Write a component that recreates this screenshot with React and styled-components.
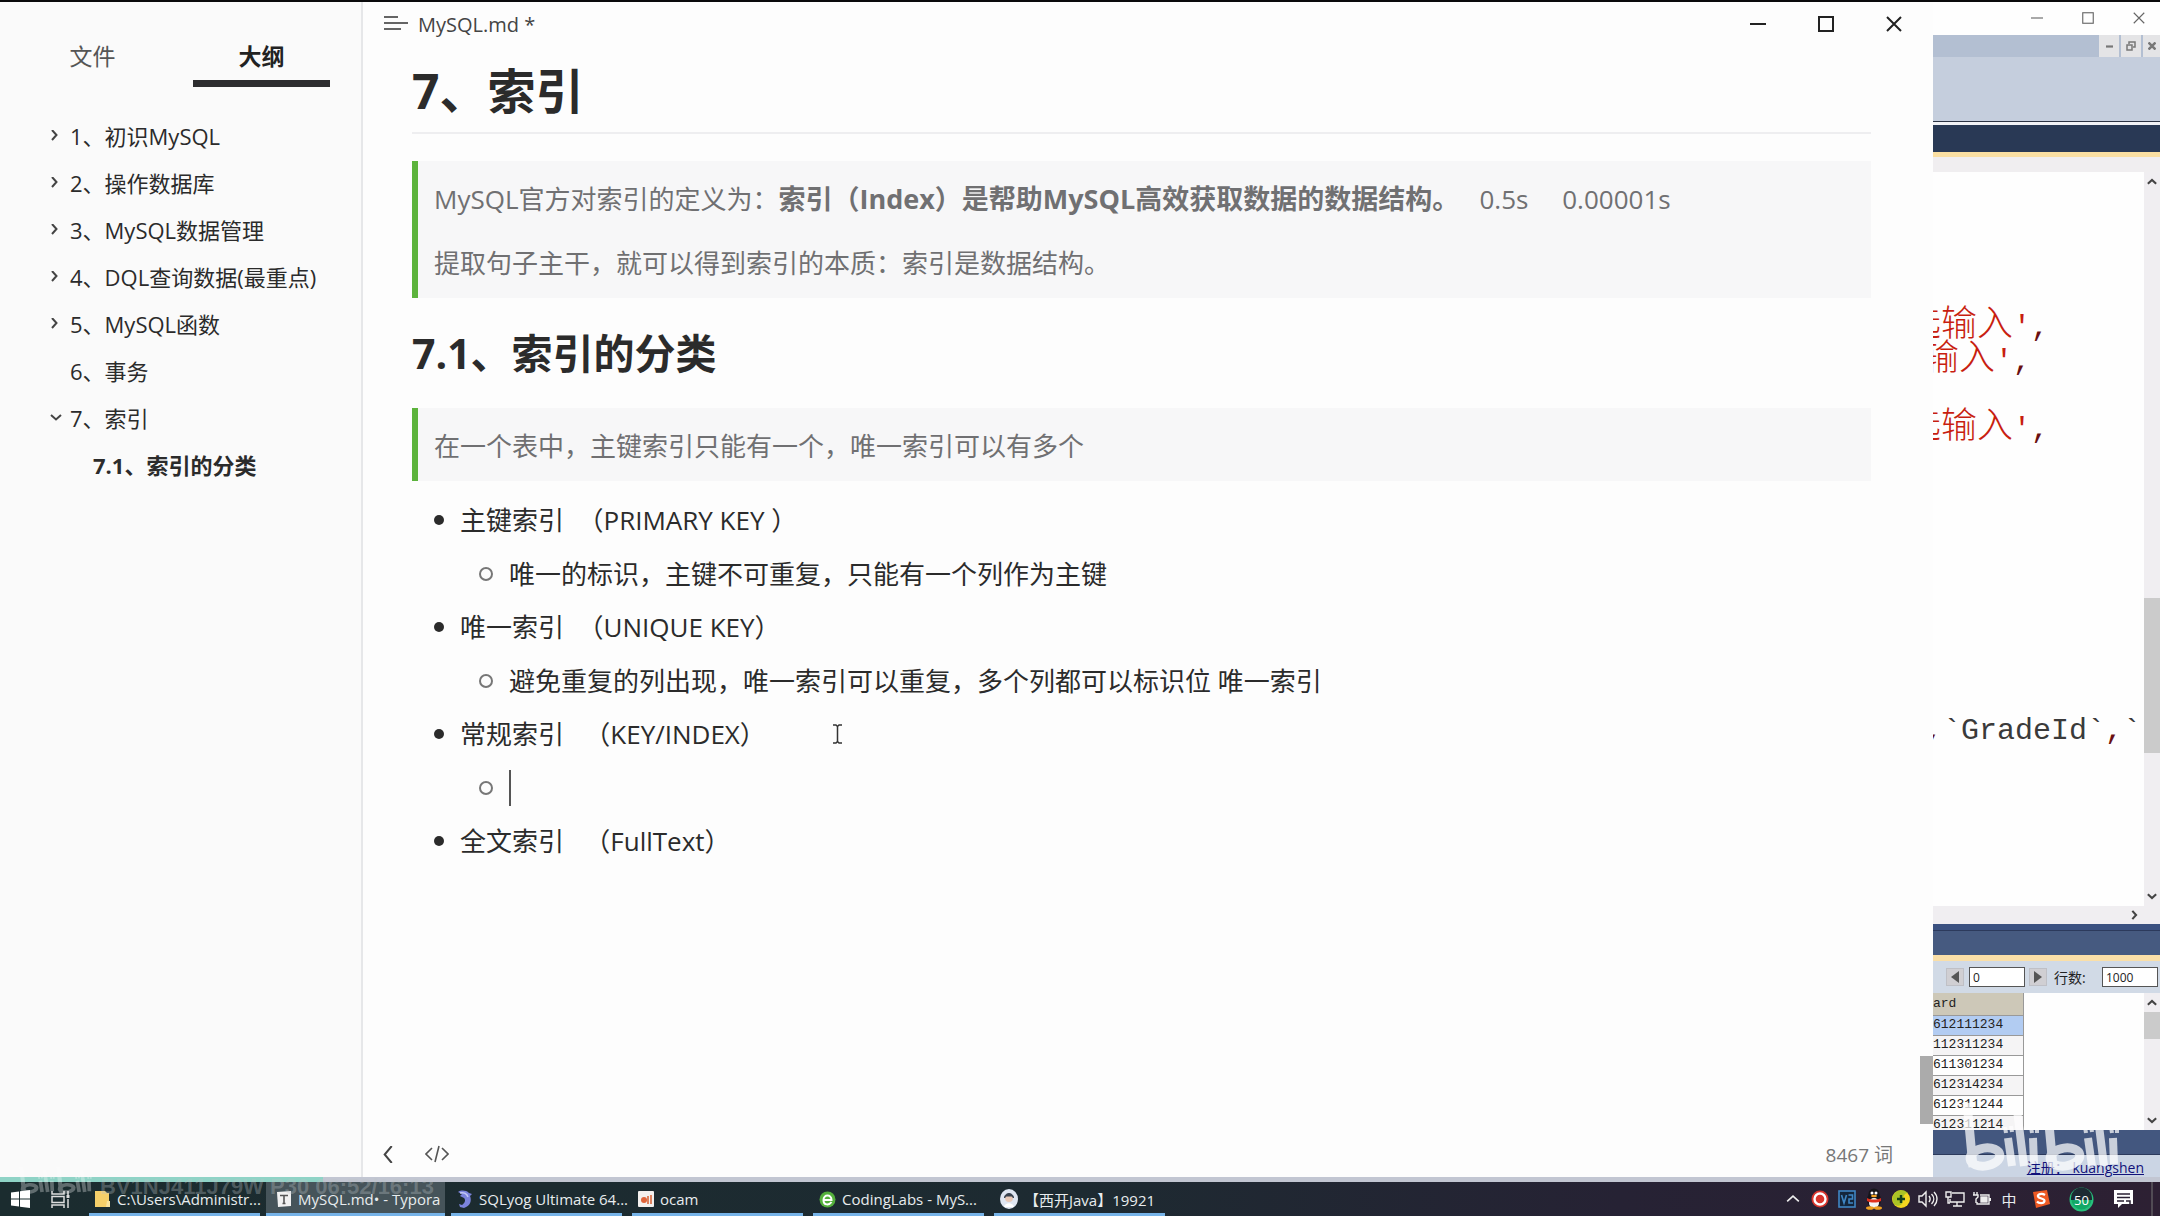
import React from "react";
import styled, { createGlobalStyle, css } from "styled-components";

const Global = createGlobalStyle`
  * { box-sizing: border-box; }
  body { margin: 0; background: #fdfdfd; }
  button, input, a { font: inherit; color: inherit; }
  button { border: 0; background: none; padding: 0; }
  a { text-decoration: none; }
  ul { list-style: none; margin: 0; padding: 0; }
  svg { display: block; flex: none; }
`;

const uiFont = `"Open Sans", "Noto Sans CJK SC", sans-serif`;

/* ---------- page ---------- */

const Screen = styled.div`
  display: flex;
  flex-direction: column;
  min-height: 100vh;
  overflow: hidden;
  font-family: ${uiFont};
  color: #2b2b2b;
  border-top: 2px solid #0a0a0c;
  position: relative;
`;

const Workspace = styled.div`
  flex: 1;
  display: flex;
  min-height: 0;
`;

/* ---------- sidebar ---------- */

const Sidebar = styled.aside`
  width: 363px;
  flex: none;
  background: #fafafa;
  border-right: 2px solid #e6e7e9;
`;

const Tabs = styled.div`
  display: flex;
  gap: 32px;
  padding: 36px 24px 0;
`;

const Tab = styled.button`
  width: 137px;
  height: 49px;
  padding-bottom: 6px;
  font-size: 23px;
  line-height: 34px;
  border-bottom: 7px solid ${(p) => (p.$active ? "#2d2d2f" : "transparent")};
  font-weight: ${(p) => (p.$active ? 700 : 400)};
  color: ${(p) => (p.$active ? "#222" : "#555")};
`;

const Outline = styled.nav`
  padding: 24px 0 0 48px;
`;

const OutlineRow = styled.div`
  display: flex;
  align-items: center;
  height: 47px;
  font-size: 22px;
  font-weight: ${(p) => (p.$strong ? 700 : 400)};
  padding-left: ${(p) => (p.$strong ? 23 : 0)}px;
  white-space: nowrap;
`;

const Twisty = styled.button`
  width: 22px;
  height: 22px;
  display: flex;
  align-items: flex-end;
`;

/* ---------- editor ---------- */

const Editor = styled.main`
  flex: 1;
  min-width: 0;
  display: flex;
  flex-direction: column;
  background: #fdfdfd;
  position: relative;
`;

const TitleBar = styled.header`
  display: flex;
  align-items: center;
  height: 44px;
  padding: 0 31px 0 21px;
  gap: 10px;
  font-size: 20px;
  color: #444;
`;

const WindowControls = styled.div`
  display: flex;
  margin-left: auto;
  gap: ${(p) => p.$gap}px;
`;

const IconButton = styled.button`
  display: flex;
  align-items: center;
  justify-content: center;
`;

const Article = styled.article`
  flex: 1;
  padding: 0 62px 0 49px;
  font-size: 26px;
  line-height: 42px;
`;

const H1 = styled.h1`
  margin: 14px 0 27px;
  padding-bottom: 10px;
  border-bottom: 2px solid #eeeef0;
  font-size: 48px;
  line-height: 62px;
`;

const H2 = styled.h2`
  margin: 25px 0;
  font-size: 41px;
  line-height: 60px;
`;

const Quote = styled.blockquote`
  margin: 0;
  padding: 17px 16px 14px;
  border-left: 6px solid #5cb33c;
  background: #f7f7f8;
  color: #707072;
  white-space: pre-wrap;

  p { margin: 0 0 22px; }
  p:last-child { margin: 0; }
  strong { font-size: 27px; }
`;

const List = styled.ul`
  padding: 18px 0 0 22px;
`;

const Item = styled.li`
  display: flex;
  align-items: center;
  height: 42px;
  margin-bottom: ${(p) => (p.$nested ? 11 : 12)}px;
  margin-left: ${(p) => (p.$nested ? 45 : 0)}px;
  white-space: pre;

  &::before {
    content: "";
    flex: none;
    width: 10px;
    height: 10px;
    margin-right: 16px;
    border-radius: 50%;
    ${(p) =>
      p.$nested
        ? css`border: 2px solid #777;`
        : css`background: #2b2b2b;`}
  }
`;

const Caret = styled.span`
  width: 2px;
  height: 36px;
  background: #555;
`;

const Pointer = styled.svg`
  margin-left: 67px;
`;

const Thumb = styled.div`
  position: absolute;
  right: 0;
  bottom: 53px;
  width: 13px;
  height: 68px;
  background: #ababab;
`;

const Footer = styled.footer`
  display: flex;
  align-items: center;
  gap: 29px;
  height: 46px;
  padding: 0 40px 0 16px;
  font-size: 19px;
  color: #777;
`;

const WordCount = styled.button`
  margin-left: auto;
`;

/* ---------- database window ---------- */

const Db = styled.section`
  width: 227px;
  flex: none;
  display: flex;
  flex-direction: column;
  overflow: hidden;
  background: #fefefe;
`;

const DbTitle = styled.div`
  display: flex;
  align-items: center;
  height: 33px;
  padding: 0 15px 2px;
`;

const Band = styled.div`
  flex: none;
  height: ${(p) => p.$h}px;
  background: ${(p) => p.$bg};
  ${(p) => p.$line && css`border-bottom: 1px solid ${p.$line};`}
`;

const MdiBar = styled(Band)`
  display: flex;
  justify-content: flex-end;
  gap: 2px;
`;

const MdiButton = styled(IconButton)`
  width: ${(p) => p.$w || 20}px;
  background: #e4e4e6;
`;

const CodeArea = styled.div`
  flex: 1;
  display: flex;
  min-height: 0;
`;

const Code = styled.div`
  flex: 1;
  min-width: 0;
  padding-top: 32px;
  overflow: hidden;
  font-family: "Liberation Mono", "Noto Sans CJK SC", monospace;
  font-size: 30px;
`;

const CodeLine = styled.div`
  display: flex;
  justify-content: flex-end;
  align-items: baseline;
  height: 34px;
  line-height: 34px;
  padding-right: ${(p) => p.$pad || 0}px;
  white-space: pre;
  color: ${(p) => (p.$text ? "#c81e10" : "#3a3a3a")};
`;

const Han = styled.span`
  font-size: 36px;
  line-height: 42px;
  font-weight: 300;
`;

const Comma = styled.span`
  color: #6a1010;
`;

const ScrollV = styled.div`
  width: 16px;
  flex: none;
  display: flex;
  flex-direction: column;
  align-items: center;
  justify-content: space-between;
  padding: ${(p) => p.$pad}px 0;
  background: #f0eef1;
  position: relative;

  &::after {
    content: "";
    position: absolute;
    left: 0;
    right: 0;
    top: ${(p) => p.$top}px;
    height: ${(p) => p.$size}px;
    background: #cbcbcb;
  }
`;

const ScrollH = styled(Band)`
  display: flex;
  align-items: center;
  justify-content: flex-end;
  padding-right: 21px;
`;

const Pager = styled.form`
  display: flex;
  align-items: center;
  height: 32px;
  padding: 0 2px 0 13px;
  background: #d1dae6;
  font-size: 14px;
  color: #222;
`;

const PageButton = styled(IconButton)`
  width: 18px;
  height: 18px;
  background: #d0cfd3;
  border: 1px solid #bfc0c6;
`;

const PageInput = styled.input`
  width: 56px;
  height: 20px;
  margin: 0 4px 0 5px;
  padding: 0 3px;
  border: 1px solid #555;
  background: #fff;
  font-size: 12px;
`;

const LimitLabel = styled.label`
  display: flex;
  align-items: center;
  margin-left: 7px;
  white-space: nowrap;
  flex: 1;
  justify-content: space-between;

  input { margin: 0; }
`;

const GridArea = styled.div`
  display: flex;
  height: 137px;
  overflow: hidden;
`;

const Grid = styled.table`
  width: 91px;
  border-collapse: collapse;
  font-family: "Liberation Mono", monospace;
  font-size: 13px;
  color: #222;

  th, td {
    height: 20px;
    padding: 0;
    line-height: 18px;
    text-align: left;
    font-weight: 400;
    border-bottom: 1px solid #999;
    border-right: 1px solid #999;
  }
  th { background: #cdc8b8; height: 22px; }
  tr:nth-child(even) td { background: #f5f4f5; }
  tbody tr:first-child td { background: #b2ccf2; }
`;

const GridHolder = styled.div`
  flex: 1;
`;

const Status = styled.div`
  display: flex;
  align-items: center;
  justify-content: flex-end;
  height: 22px;
  padding: 3px 16px 0 0;
  background: #cbd5e4;
  font-size: 14px;
  color: #12127a;

  a { text-decoration: underline; white-space: pre; line-height: 18px; }
`;

/* ---------- taskbar ---------- */

const Progress = styled.div`
  height: 5px;
  background: linear-gradient(90deg, #8fd3c6 323px, #c2c6d2 323px);
`;

const Taskbar = styled.footer`
  display: flex;
  align-items: stretch;
  height: 34px;
  background: linear-gradient(90deg, #1b2c2f, #1d2a31 50%, #262234 75%, #2d2033);
  color: #e8ecee;
  font-size: 15px;
`;

const System = styled.div`
  display: flex;
  align-items: center;
  gap: 21px;
  width: 89px;
  padding-left: 11px;
  flex: none;
`;

const Tasks = styled.div`
  display: flex;
  gap: 10px;
`;

const Task = styled.button`
  display: flex;
  align-items: center;
  gap: 6px;
  width: 171px;
  padding: 3px 6px 0;
  border-bottom: 3px solid #76b3e8;
  white-space: nowrap;
  ${(p) =>
    p.$active &&
    css`
      width: 179px;
      margin: 0 -4px;
      padding-left: 10px;
      background: #46545a;
    `}
`;

const Tray = styled.div`
  display: flex;
  align-items: center;
  gap: 5px;
  margin-left: auto;
  padding-right: 4px;
`;

const TrayCell = styled(IconButton)`
  width: ${(p) => p.$w || 22}px;
  height: 34px;
  font-size: 15px;
`;

/* ---------- watermarks ---------- */

const Mark = styled.svg`
  position: absolute;
  right: ${(p) => (p.$big ? "36px" : "auto")};
  left: ${(p) => (p.$big ? "auto" : "18px")};
  bottom: ${(p) => (p.$big ? 40 : 20)}px;
  opacity: ${(p) => (p.$big ? 0.72 : 0.3)};
  pointer-events: none;
`;

const Stamp = styled.span`
  position: absolute;
  left: 100px;
  bottom: 17px;
  font-family: "Liberation Sans", sans-serif;
  font-size: 22px;
  font-weight: 700;
  line-height: 24px;
  color: rgba(190, 196, 200, 0.32);
  white-space: nowrap;
  pointer-events: none;
`;

/* ---------- icons ---------- */

const Chevron = ({ d, size = 12, color = "#444", w = 2 }) => (
  <svg width={size} height={size} viewBox="0 0 12 12" fill="none" stroke={color} strokeWidth={w}>
    <path d={d} />
  </svg>
);
const RIGHT = "M4 0 L8.5 5 L4 10";
const DOWN = "M3 3 L8 7.5 L13 3";
const SMALL_RIGHT = "M4 1 L8.5 6 L4 11";
const SMALL_DOWN = "M1 4 L6 8.5 L11 4";
const UP = "M1 8 L6 3.5 L11 8";

const TwistyIcon = ({ d }) => (
  <svg width="14" height="16" viewBox="0 0 14 16" fill="none" stroke="#444" strokeWidth="2">
    <path d={d} />
  </svg>
);

const MinIcon = ({ s, c, w }) => (
  <svg width={s} height={s} viewBox="0 0 16 16" stroke={c} strokeWidth={w}><path d="M0 8h16" /></svg>
);
const MaxIcon = ({ s, c, w }) => (
  <svg width={s} height={s} viewBox="0 0 16 16" fill="none" stroke={c} strokeWidth={w}><rect x="1" y="1" width="14" height="14" /></svg>
);
const CloseIcon = ({ s, c, w }) => (
  <svg width={s} height={s} viewBox="0 0 16 16" stroke={c} strokeWidth={w}><path d="M1 1l14 14M15 1L1 15" /></svg>
);

const Logo = ({ big }) => (
  <Mark
    $big={big || undefined}
    width={big ? 164 : 76}
    height={big ? 80 : 32}
    viewBox="0 0 164 80"
    preserveAspectRatio="none"
    stroke="#fff"
    fill="none"
    role="img"
    aria-label="bilibili"
  >
    {[0, 80].map((x) => (
      <g key={x} transform={`translate(${x} 0)`}>
        <line x1="7" y1="7" x2="13" y2="71" strokeWidth="9" />
        <ellipse cx="25" cy="61" rx="15" ry="9" strokeWidth="9" transform="rotate(-8 25 61)" />
        <line x1="48" y1="42" x2="52" y2="70" strokeWidth="8" />
        <line x1="57" y1="14" x2="64" y2="70" strokeWidth="8" />
        <line x1="73" y1="42" x2="74" y2="68" strokeWidth="8" />
        <line x1="45" y1="31" x2="46" y2="37" strokeWidth="4" />
        <line x1="51" y1="30" x2="52" y2="36" strokeWidth="4" />
        <line x1="71" y1="31" x2="72" y2="37" strokeWidth="4" />
        <line x1="77" y1="31" x2="77" y2="37" strokeWidth="4" />
      </g>
    ))}
  </Mark>
);

const icons = {
  folder: (
    <svg width="16" height="18" viewBox="0 0 16 18"><path d="M0 1h10l2 2h2v14H0z" fill="#f5cf69" /><path d="M12 11h3v6h-4z" fill="#f8e3a0" /></svg>
  ),
  typora: (
    <svg width="16" height="16" viewBox="0 0 16 16"><path d="M1 1l14-1v15l-13 1z" fill="#f1f1f1" /><path d="M4 4.5h8M8 4.5v8M6.5 12.5h3" stroke="#555" strokeWidth="1.6" /></svg>
  ),
  sqlyog: (
    <svg width="16" height="18" viewBox="0 0 16 18"><path d="M1 2c3-2 8-2 11 1l3 1-2 2c2 5 0 10-6 12l-4-1-1-3 3 1c3-2 4-5 2-7L3 6l2-2z" fill="#7b83dc" /><path d="M3 3c4-1 7 1 8 4" fill="none" stroke="#c3c8f4" strokeWidth="1.5" /></svg>
  ),
  ocam: (
    <svg width="16" height="16" viewBox="0 0 16 16"><rect width="16" height="16" rx="1" fill="#f4f0ee" /><circle cx="6" cy="9" r="3" fill="#e0643a" /><path d="M10 5v8M13 4v9" stroke="#d9683c" strokeWidth="1.6" /></svg>
  ),
  browser: (
    <svg width="17" height="17" viewBox="0 0 17 17"><circle cx="8.500" cy="8.500" r="8" fill="#54b03c" /><path d="M4.500 9h8c0-6-8-6-8 0s6 5 8 2" fill="none" stroke="#fff" strokeWidth="2" /></svg>
  ),
  avatar: (
    <svg width="18" height="20" viewBox="0 0 18 20"><ellipse cx="9" cy="10" rx="9" ry="10" fill="#dfe6f2" /><circle cx="9" cy="9" r="4" fill="#e8c9b8" /><path d="M4.500 9c0-6 9-6 9 0l-1.500-2H6z" fill="#39424f" stroke="#39424f" /><path d="M4 18c1-5 9-5 10 0" fill="#fff" /></svg>
  ),
};

const tasks = [
  ["folder", "C:\\Users\\Administr..."],
  ["typora", "MySQL.md• - Typora", true],
  ["sqlyog", "SQLyog Ultimate 64..."],
  ["ocam", "ocam"],
  ["browser", "CodingLabs - MyS..."],
  ["avatar", "【西开Java】19921"],
];

const headings = [
  ["1、初识MySQL", RIGHT],
  ["2、操作数据库", RIGHT],
  ["3、MySQL数据管理", RIGHT],
  ["4、DQL查询数据(最重点)", RIGHT],
  ["5、MySQL函数", RIGHT],
  ["6、事务", null],
  ["7、索引", DOWN],
  ["7.1、索引的分类", null, true],
];

const codeLines = [
  [], [], [],
  [95, "选输入"],
  [113, "选输入"],
  [],
  [95, "选输入"],
  [], [], [], [], [], [], [], [],
];

const cards = ["612111234", "112311234", "611301234", "612314234", "612311244", "612311214"];

const SpeakerIcon = (
  <svg width="20" height="18" viewBox="0 0 20 18" fill="none" stroke="#eee" strokeWidth="1.4"><path d="M1 6h3l4-4v14l-4-4H1z" /><path d="M11 6c1.500 2 1.500 4 0 6M13.500 4c3 3 3 7 0 10M16 2c4 4 4 10 0 14" /></svg>
);
const MonitorIcon = (
  <svg width="20" height="18" viewBox="0 0 20 18" fill="none" stroke="#eee" strokeWidth="1.4"><path d="M7 3h12v9H5V9M8 16h9M12 12v4" /><path d="M1 2h5v5H1zM3 7v6h2" /></svg>
);
const BatteryIcon = (
  <svg width="20" height="16" viewBox="0 0 20 16" fill="none" stroke="#eee" strokeWidth="1.400"><path d="M8 4h9v9H5v-2" /><path d="M18 7v3" strokeWidth="2" /><rect x="9" y="6" width="6" height="5" fill="#eee" /><path d="M2 1v3M5 1v3M1 4h5v2l-2 2v4" /></svg>
);
const PenguinIcon = (
  <svg width="20" height="22" viewBox="0 0 20 22"><ellipse cx="10" cy="12" rx="7" ry="8" fill="#15151a" /><circle cx="10" cy="6" r="5.500" fill="#15151a" /><ellipse cx="10" cy="15" rx="5" ry="5" fill="#f4f4f4" /><circle cx="8" cy="5" r="1.500" fill="#fff" /><circle cx="12" cy="5" r="1.500" fill="#fff" /><ellipse cx="10" cy="8" rx="3" ry="1.200" fill="#f0a020" /><path d="M3 10c4 2 10 2 14 0v3c-4 2-10 2-14 0z" fill="#e0301e" /><ellipse cx="6" cy="20" rx="4" ry="1.800" fill="#f0a020" /><ellipse cx="14" cy="20" rx="4" ry="1.800" fill="#f0a020" /></svg>
);

export default function App() {
  return (
    <Screen>
      <Global />
      <Workspace>
        <Sidebar>
          <Tabs>
            <Tab>文件</Tab>
            <Tab $active>大纲</Tab>
          </Tabs>
          <Outline>
            <ul>
              {headings.map(([text, arrow, strong]) => (
                <li key={text}>
                  <OutlineRow $strong={strong}>
                    <Twisty as={arrow ? "button" : "span"} aria-label={arrow ? "展开" : undefined}>
                      {arrow && <TwistyIcon d={arrow} />}
                    </Twisty>
                    <a href="#heading">{text}</a>
                  </OutlineRow>
                </li>
              ))}
            </ul>
          </Outline>
        </Sidebar>

        <Editor>
          <TitleBar>
            <IconButton aria-label="菜单">
              <svg width="24" height="18" viewBox="0 0 24 18" stroke="#333" strokeWidth="1.5"><path d="M0 2h14M0 8h24M0 14h17" /></svg>
            </IconButton>
            <span>MySQL.md *</span>
            <WindowControls $gap={52}>
              <IconButton aria-label="最小化"><MinIcon s={16} c="#222" w={2} /></IconButton>
              <IconButton aria-label="最大化"><MaxIcon s={16} c="#222" w={2} /></IconButton>
              <IconButton aria-label="关闭"><CloseIcon s={16} c="#222" w={2} /></IconButton>
            </WindowControls>
          </TitleBar>
          <Article>
            <H1>7、索引</H1>
            <Quote>
              <p>MySQL官方对索引的定义为：<strong>索引（Index）是帮助MySQL高效获取数据的数据结构。</strong>{"   0.5s     0.00001s"}</p>
              <p>提取句子主干，就可以得到索引的本质：索引是数据结构。</p>
            </Quote>
            <H2 id="heading">7.1、索引的分类</H2>
            <Quote>
              <p>在一个表中，主键索引只能有一个，唯一索引可以有多个</p>
            </Quote>
            <List>
              <Item>{"主键索引  （PRIMARY KEY ）"}</Item>
              <Item $nested>唯一的标识，主键不可重复，只能有一个列作为主键</Item>
              <Item>{"唯一索引  （UNIQUE KEY）"}</Item>
              <Item $nested>避免重复的列出现，唯一索引可以重复，多个列都可以标识位 唯一索引</Item>
              <Item>
                {"常规索引   （KEY/INDEX）"}
                <Pointer width="9" height="20" viewBox="0 0 9 20" fill="none" stroke="#333" strokeWidth="1.5">
                  <path d="M0 1h3l1.500 1.500L6 1h3M4.500 2v16M0 19h3l1.500-1.500L6 19h3" />
                </Pointer>
              </Item>
              <Item $nested><Caret /></Item>
              <Item>{"全文索引   （FullText）"}</Item>
            </List>
          </Article>
          <Footer>
            <IconButton aria-label="侧边栏"><Chevron d="M9 0 L4 6 L9 12" size={17} color="#444" w={1.4} /></IconButton>
            <IconButton aria-label="源代码模式">
              <svg width="24" height="18" viewBox="0 0 24 18" fill="none" stroke="#555" strokeWidth="1.6"><path d="M7 3L1 9l6 6M17 3l6 6-6 6M14 1l-4 16" /></svg>
            </IconButton>
            <WordCount>8467 词</WordCount>
          </Footer>
          <Thumb />
        </Editor>

        <Db>
          <DbTitle>
            <WindowControls $gap={39}>
              <IconButton aria-label="最小化"><MinIcon s={12} c="#666" w={1.5} /></IconButton>
              <IconButton aria-label="最大化"><MaxIcon s={12} c="#666" w={1.5} /></IconButton>
              <IconButton aria-label="关闭"><CloseIcon s={12} c="#666" w={1.5} /></IconButton>
            </WindowControls>
          </DbTitle>
          <MdiBar $h={22} $bg="#b3bfd2">
            <MdiButton aria-label="最小化"><MinIcon s={7} c="#777" w={5} /></MdiButton>
            <MdiButton aria-label="还原">
              <svg width="10" height="10" viewBox="0 0 10 10" fill="none" stroke="#777" strokeWidth="1.5"><path d="M1 4h5v5H1zM3 3V1h6v5H7" /></svg>
            </MdiButton>
            <MdiButton $w={17} aria-label="关闭"><CloseIcon s={8} c="#777" w={5} /></MdiButton>
          </MdiBar>
          <Band $h={65} $bg="#c5cedd" $line="#2d3444" />
          <Band $h={3} $bg="#f2f3f6" />
          <Band $h={27} $bg="#293955" />
          <Band $h={5} $bg="#fadfa2" />
          <Band $h={15} $bg="#f0eef0" />
          <CodeArea>
            <Code>
              {codeLines.map(([pad, text], i) => (
                <CodeLine key={i} $pad={pad} $text={text}>
                  {text && <><Han>{text}</Han>'<Comma>,</Comma></>}
                </CodeLine>
              ))}
              <CodeLine $pad={3}><Comma>,</Comma>`GradeId`<Comma>,</Comma>`</CodeLine>
            </Code>
            <ScrollV $pad={5} $top={426} $size={155}>
              <Chevron d={UP} size={10} w={2.5} />
              <Chevron d={SMALL_DOWN} size={10} w={2.5} />
            </ScrollV>
          </CodeArea>
          <ScrollH $h={18} $bg="#f0eef1"><Chevron d={SMALL_RIGHT} size={10} w={2.5} /></ScrollH>
          <Band $h={7} $bg="#3b5180" $line="#2c3a5c" />
          <Band $h={24} $bg="#465a80" />
          <Band $h={6} $bg="#fadfa8" />
          <Pager>
            <PageButton type="button" aria-label="上一页"><svg width="8" height="12" viewBox="0 0 8 12"><path d="M8 0v12L0 6z" fill="#555" /></svg></PageButton>
            <PageInput aria-label="起始行" defaultValue="0" />
            <PageButton type="button" aria-label="下一页"><svg width="8" height="12" viewBox="0 0 8 12"><path d="M0 0v12l8-6z" fill="#555" /></svg></PageButton>
            <LimitLabel>行数:<PageInput defaultValue="1000" /></LimitLabel>
          </Pager>
          <GridArea>
            <GridHolder>
              <Grid>
                <thead><tr><th>ard</th></tr></thead>
                <tbody>{cards.map((c) => <tr key={c}><td>{c}</td></tr>)}</tbody>
              </Grid>
            </GridHolder>
            <ScrollV $pad={5} $top={19} $size={27}>
              <Chevron d={UP} size={10} w={2.5} />
              <Chevron d={SMALL_DOWN} size={10} w={2.5} />
            </ScrollV>
          </GridArea>
          <Band $h={25} $bg="#43577f" $line="#2c3a5c" />
          <Status><a href="#register">{"注册： kuangshen"}</a></Status>
        </Db>
      </Workspace>

      <Progress />
      <Taskbar>
        <System>
          <IconButton aria-label="开始">
            <svg width="19" height="18" viewBox="0 0 19 18" fill="#fff"><path d="M0 2.500L8 1.500V8.500H0zM9 1.300L19 0v8.500H9zM0 9.500h8v7L0 15.500zM9 9.500h10V18L9 16.700z" /></svg>
          </IconButton>
          <IconButton aria-label="任务视图">
            <svg width="20" height="17" viewBox="0 0 20 17" fill="none" stroke="#ddd" strokeWidth="1.500"><path d="M1 0v3h12V0M1 5.500h12v6H1zM1 17v-3h12v3M17 0v4M17 8v9" /><path d="M17 4v3" strokeWidth="3" /></svg>
          </IconButton>
        </System>
        <Tasks>
          {tasks.map(([icon, text, active]) => (
            <Task key={icon} $active={active}>{icons[icon]}<span>{text}</span></Task>
          ))}
        </Tasks>
        <Tray>
          <TrayCell aria-label="显示隐藏的图标"><Chevron d={UP} size={14} color="#eee" w={1.4} /></TrayCell>
          <TrayCell aria-label="录制"><svg width="18" height="18" viewBox="0 0 18 18"><circle cx="9" cy="9" r="8.500" fill="#d8352c" /><circle cx="9" cy="9" r="5.500" fill="none" stroke="#fff" strokeWidth="2.400" /></svg></TrayCell>
          <TrayCell aria-label="VNC"><svg width="18" height="18" viewBox="0 0 18 18" fill="none" stroke="#3f86c4" strokeWidth="1.600"><rect x="1" y="1" width="16" height="16" fill="#14263c" /><path d="M3.500 5l2.500 8 2.500-8M10.500 5h4v4h-3.500v4h4" /></svg></TrayCell>
          <TrayCell aria-label="QQ">{PenguinIcon}</TrayCell>
          <TrayCell aria-label="安全卫士"><svg width="18" height="18" viewBox="0 0 18 18"><circle cx="9" cy="9" r="9" fill="#f3d71f" /><path d="M2 4a9 9 0 0 1 14-1c-4 0-5 4-5 8s-5 6-8 4a9 9 0 0 1-1-11z" fill="#7cb82b" opacity=".6" /><path d="M9 5v8M5 9h8" stroke="#14401a" strokeWidth="2.400" /></svg></TrayCell>
          <TrayCell aria-label="音量">{SpeakerIcon}</TrayCell>
          <TrayCell aria-label="网络">{MonitorIcon}</TrayCell>
          <TrayCell aria-label="电池">{BatteryIcon}</TrayCell>
          <TrayCell>中</TrayCell>
          <TrayCell $w={32} aria-label="输入法"><svg width="18" height="18" viewBox="0 0 18 18"><path d="M1 2l14-2 3 14-14 4z" fill="#ee5a24" /><path d="M13 5c-3-2-8-1-7 1.500s7 1.500 6.500 4.500-6 2.500-7.500.5" fill="none" stroke="#fff" strokeWidth="2.200" /></svg></TrayCell>
          <TrayCell $w={38} aria-label="加速球"><svg width="25" height="25" viewBox="0 0 25 25"><circle cx="12.500" cy="12.500" r="11" fill="#12a866" stroke="#27c07c" strokeWidth="2" /><path d="M2 11a10.500 10.500 0 0 1 21 0v2H2z" fill="#1c2b33" /><text x="12.500" y="17.500" fontFamily="Open Sans" fontSize="13" fill="#fff" textAnchor="middle">50</text></svg></TrayCell>
          <TrayCell $w={38} aria-label="通知"><svg width="20" height="19" viewBox="0 0 20 19"><path d="M0 0h19v14H8l-4 4v-4H0z" fill="#fff" /><path d="M3 4h13M3 7.500h13M3 11h7" stroke="#2a2033" strokeWidth="1.500" /><path d="M12 11h4v4" stroke="#2a2033" fill="none" strokeWidth="1.500" /></svg></TrayCell>
          <svg width="8" height="34" viewBox="0 0 8 34" stroke="#777"><path d="M4 0v34" /></svg>
        </Tray>
      </Taskbar>
      <Logo big />
      <Logo />
      <Stamp>BV1NJ411J79W P30 06:52/16:13</Stamp>
    </Screen>
  );
}
